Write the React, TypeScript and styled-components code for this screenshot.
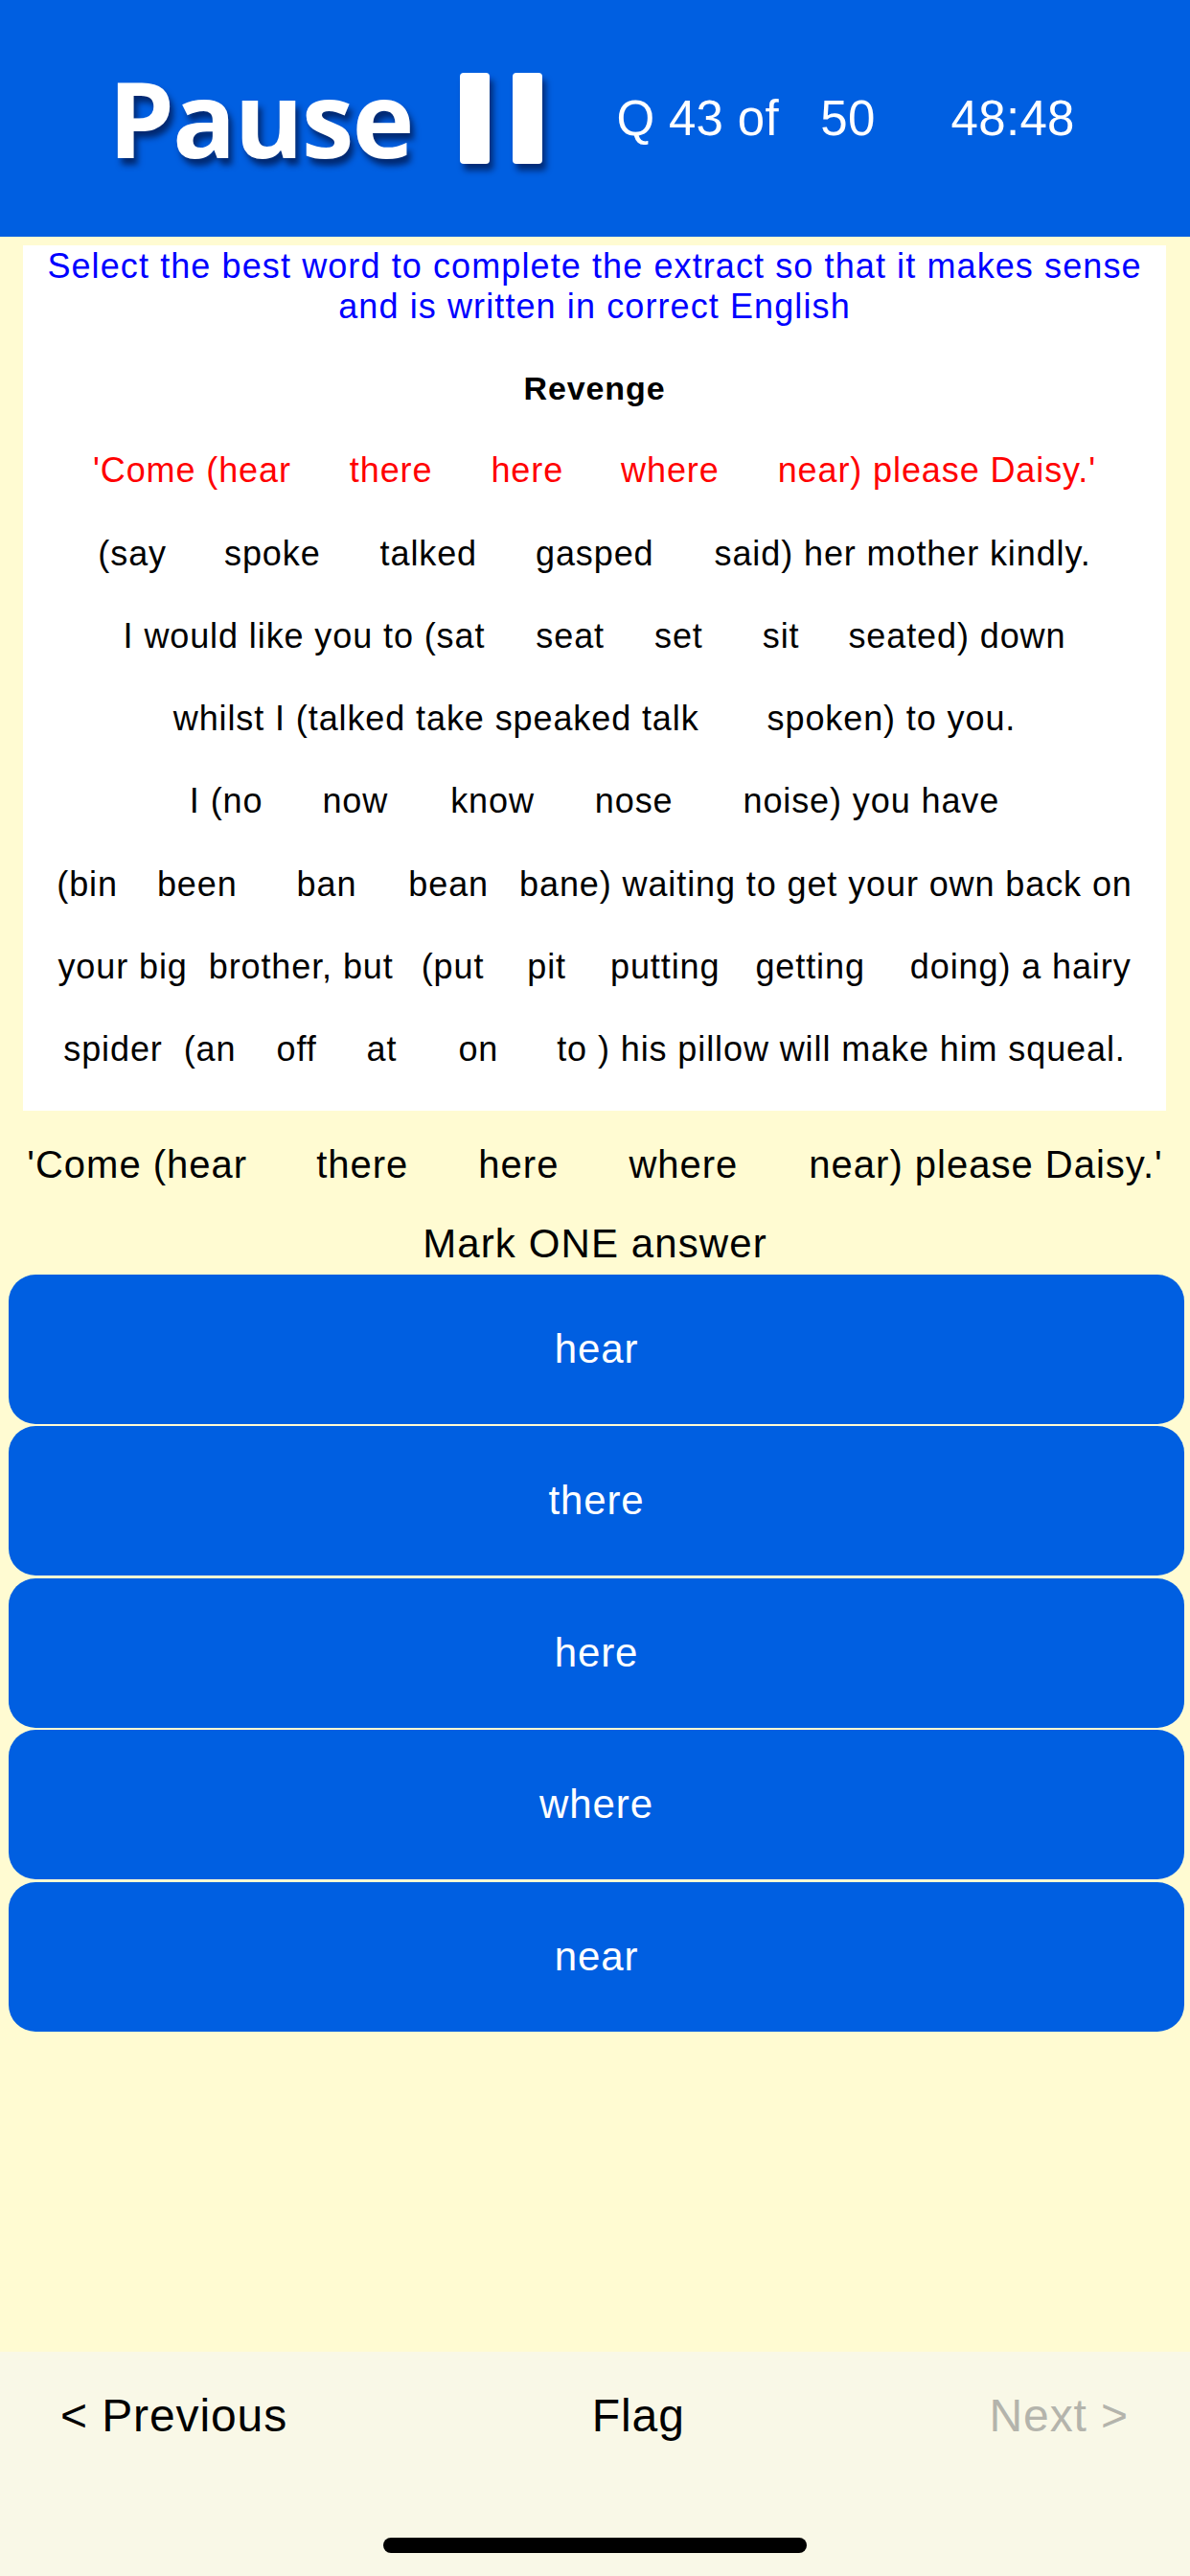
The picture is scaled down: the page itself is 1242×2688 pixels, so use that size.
import React from "react";
import styled, { createGlobalStyle } from "styled-components";

const GlobalStyle = createGlobalStyle`
  html, body {
    margin: 0;
    padding: 0;
    background: #fffbd2;
  }
  * { box-sizing: border-box; }
`;

const BLUE = "#005fe1";
const FONT = `"Liberation Sans", Arial, Helvetica, sans-serif`;

const Page = styled.div`
  width: 1242px;
  min-height: 2688px;
  display: flex;
  flex-direction: column;
  background: #fffbd2;
  font-family: ${FONT};
`;

const Header = styled.header`
  height: 247px;
  background: ${BLUE};
  display: flex;
  align-items: center;
  padding-left: 113px;
  color: #fff;
`;

const Title = styled.h1`
  margin: 0;
  font-family: "Open Sans", "Lato", sans-serif;
  font-weight: 700;
  font-size: 110px;
  line-height: 1;
  letter-spacing: -2px;
  color: #fff;
  text-shadow: 4px 7px 6px rgba(0, 10, 50, 0.65);
  transform: translateY(-2px);
`;

const PauseIcon = styled.div`
  display: flex;
  gap: 24px;
  margin-left: 50px;
  margin-right: 77px;
`;

const PauseBar = styled.span`
  display: block;
  width: 31px;
  height: 95px;
  background: #fff;
  border-radius: 4px;
  box-shadow: 4px 7px 6px rgba(0, 10, 50, 0.6);
`;

const Info = styled.span<{ $mr?: number }>`
  font-family: ${FONT};
  font-size: 51px;
  white-space: pre;
  letter-spacing: 0.3px;
  margin-right: ${(p) => p.$mr ?? 0}px;
`;

const Card = styled.section`
  margin: 9px 25px 0 24px;
  background: #fff;
  padding: 1px 0 20px;
  text-align: center;
`;

const Instruction = styled.p`
  margin: 0 0 21px;
  color: #0000ff;
  font-size: 36px;
  line-height: 42px;
  letter-spacing: 1.1px;
`;

const PassageLine = styled.div<{ $color?: string; $bold?: boolean; $size?: number }>`
  display: flex;
  justify-content: center;
  white-space: nowrap;
  height: 86.3px;
  line-height: 86.3px;
  font-size: ${(p) => p.$size ?? 36}px;
  font-weight: ${(p) => (p.$bold ? 700 : 400)};
  letter-spacing: 0.9px;
  color: ${(p) => p.$color ?? "#000"};
`;

const Seg = styled.span<{ $gap?: number }>`
  margin-left: ${(p) => p.$gap ?? 0}px;
`;

const Prompt = styled.div`
  display: flex;
  justify-content: center;
  white-space: nowrap;
  margin-top: 33px;
  font-size: 40px;
  line-height: 46px;
  letter-spacing: 1px;
  color: #000;
`;

const MarkLabel = styled.div`
  margin-top: 36px;
  text-align: center;
  font-size: 42px;
  line-height: 48px;
  letter-spacing: 1.1px;
  color: #000;
`;

const Options = styled.div`
  margin: 8px 6px 0 9px;
  display: flex;
  flex-direction: column;
  gap: 2.5px;
`;

const OptionButton = styled.button`
  height: 156px;
  border: none;
  border-radius: 28px;
  background: ${BLUE};
  color: #fff;
  font-family: ${FONT};
  font-size: 42px;
  letter-spacing: 0.9px;
  padding: 0;
  cursor: pointer;
`;

const Spacer = styled.div`
  flex: 1;
`;

const Footer = styled.footer`
  height: 234px;
  background: #f9f8e7;
  display: flex;
  flex-direction: column;
  align-items: stretch;
  padding-top: 39px;
`;

const NavRow = styled.nav`
  display: flex;
  justify-content: space-between;
  padding: 0 64px 0 63px;
  font-size: 48px;
  line-height: 55px;
  letter-spacing: 0.9px;
`;

const NavItem = styled.span<{ $disabled?: boolean }>`
  color: ${(p) => (p.$disabled ? "#b4b4ac" : "#000")};
`;

const HomeIndicator = styled.div`
  width: 442px;
  height: 16px;
  border-radius: 8px;
  background: #000;
  margin: auto auto 24px;
`;

type LineData = { segs: string[]; gaps: number[]; color?: string };

const passage: LineData[] = [
  {
    segs: ["'Come (hear", "there", "here", "where", "near) please Daisy.'"],
    gaps: [61, 61, 60, 61],
    color: "#ff0000",
  },
  { segs: ["(say", "spoke", "talked", "gasped", "said) her mother kindly."], gaps: [60, 62, 61, 63] },
  { segs: ["I would like you to (sat", "seat", "set", "sit", "seated) down"], gaps: [53, 52, 62, 51] },
  { segs: ["whilst I (talked take speaked talk", "spoken) to you."], gaps: [71] },
  { segs: ["I (no", "now", "know", "nose", "noise) you have"], gaps: [62, 65, 63, 73] },
  {
    segs: ["(bin", "been", "ban", "bean", "bane) waiting to get your own back on"],
    gaps: [41, 62, 54, 32],
  },
  {
    segs: ["your big", "brother, but", "(put", "pit", "putting", "getting", "doing) a hairy"],
    gaps: [22, 29, 45, 46, 37, 47],
  },
  {
    segs: ["spider", "(an", "off", "at", "on", "to ) his pillow will make him squeal."],
    gaps: [22, 42, 52, 64, 61],
  },
];

const promptLine: LineData = {
  segs: ["'Come (hear", "there", "here", "where", "near) please Daisy.'"],
  gaps: [72, 73, 73, 74],
};

const answers = ["hear", "there", "here", "where", "near"];

function renderSegs(line: LineData) {
  return line.segs.map((s, i) => (
    <Seg key={i} $gap={i === 0 ? 0 : line.gaps[i - 1]}>
      {s}
    </Seg>
  ));
}

export default function App() {
  return (
    <>
      <GlobalStyle />
      <Page>
        <Header>
          <Title>Pause</Title>
          <PauseIcon aria-label="pause">
            <PauseBar />
            <PauseBar />
          </PauseIcon>
          <Info $mr={79}>{"Q 43 of   50"}</Info>
          <Info>48:48</Info>
        </Header>

        <Card>
          <Instruction>
            Select the best word to complete the extract so that it makes sense
            <br />
            and is written in correct English
          </Instruction>
          <PassageLine $bold $size={34}>
            Revenge
          </PassageLine>
          {passage.map((line, i) => (
            <PassageLine key={i} $color={line.color}>
              {renderSegs(line)}
            </PassageLine>
          ))}
        </Card>

        <Prompt>{renderSegs(promptLine)}</Prompt>
        <MarkLabel>Mark ONE answer</MarkLabel>

        <Options>
          {answers.map((a) => (
            <OptionButton key={a}>{a}</OptionButton>
          ))}
        </Options>

        <Spacer />

        <Footer>
          <NavRow>
            <NavItem>{"< Previous"}</NavItem>
            <NavItem>Flag</NavItem>
            <NavItem $disabled>{"Next >"}</NavItem>
          </NavRow>
          <HomeIndicator />
        </Footer>
      </Page>
    </>
  );
}
